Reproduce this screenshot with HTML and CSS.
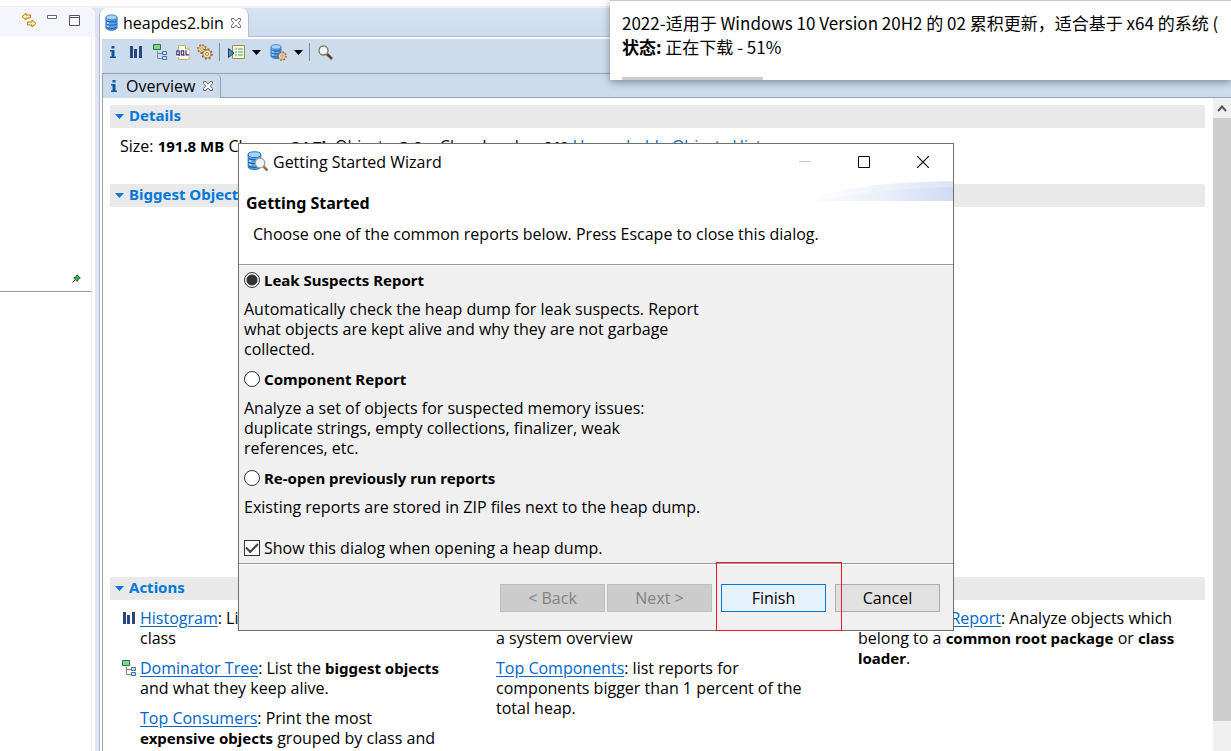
FILE: index.html
```html
<!DOCTYPE html>
<html lang="en">
<head>
<meta charset="utf-8">
<title>heapdes2.bin - Memory Analyzer</title>
<link rel="stylesheet" href="styles.css">
</head>
<body>
<svg class="defs" aria-hidden="true">
  <symbol id="i-db" viewBox="0 0 14 18">
    <path d="M1 3.500v11C1 16 3.500 17.500 7 17.500s6-1.500 6-3v-11z" fill="#5aa5ea" stroke="#2b6fc0"/>
    <path d="M1.500 7c2 2 9 2 11 0M1.500 10.500c2 2 9 2 11 0M1.500 14c2 2 9 2 11 0" fill="none" stroke="#1a5cb0" stroke-width="1.200"/>
    <path d="M3 8.800v1.500M3 12.300v1.500M3 5.500v1.200" stroke="#cfe8fc" stroke-width="2"/>
    <ellipse cx="7" cy="3.500" rx="6" ry="2.700" fill="#a5d2f7" stroke="#3579c6"/>
  </symbol>
  <symbol id="i-x" viewBox="0 0 12 12">
    <path d="M1.500 1.500h2.500l2 2.500 2-2.500h2.500v2L8.300 6l2.200 2.500v2H8L6 8l-2 2.500H1.500v-2L3.700 6 1.500 3.500z" fill="#fff" stroke="#6b6b6b"/>
  </symbol>
  <symbol id="i-info" viewBox="0 0 8 14">
    <path d="M2.500 1h3v2.500h-3zM1 5h4.500v6.500H7V13H1v-1.500h1.500v-5H1z" fill="#0f5a9e"/>
  </symbol>
  <symbol id="i-bars" viewBox="0 0 12 12">
    <path d="M0 0h3v12H0zM4 3h3v9H4zM9 0h3v12H9z" fill="#27477c"/>
  </symbol>
  <symbol id="i-tree" viewBox="0 0 15 16">
    <path d="M4.500 7v7.500H9M4.500 9.500H9" fill="none" stroke="#76879c"/>
    <path d="M.5.5h7v5h-7z" fill="#8fd08b" stroke="#1f7a4c"/>
    <path d="M9.500 7.500h4v3h-4zM9.500 12.500h4v3h-4z" fill="#cfe2f8" stroke="#3f72ad"/>
  </symbol>
  <symbol id="i-gear" viewBox="0 0 12 12">
    <circle cx="6" cy="6" r="5" fill="none" stroke="#8d6433" stroke-width="1.600" stroke-dasharray="2 1.900"/>
    <circle cx="6" cy="6" r="4" fill="#f6dfae" stroke="#a87a3c" stroke-width=".8"/>
    <circle cx="6" cy="6" r="1.500" fill="#fff" stroke="#8d6433" stroke-width=".8"/>
  </symbol>
</svg>

<div class="workbench">
  <aside class="side">
    <div class="side-tools">
      <button class="icon-btn" aria-label="Link with editor"><svg width="16" height="16" viewBox="0 0 16 16"><path d="M1 4.500 5 1v2h4.500v3H5v2zM15 11.500 11 8v2H6.500v3H11v2z" fill="#fff0a6" stroke="#b97a14"/><path d="M9.500 3v3M6.500 10v3" stroke="#b97a14"/></svg></button>
      <button class="icon-btn" aria-label="Minimize view"><svg width="10" height="12" viewBox="0 0 10 12"><path d="M.5 1.500h9v3h-9z" fill="#fff" stroke="#666"/></svg></button>
      <button class="icon-btn" aria-label="Maximize view"><svg width="11" height="11" viewBox="0 0 11 11"><path d="M.5.5h10v10H.5zM.5 2.500h10" fill="#fff" stroke="#555"/></svg></button>
    </div>
    <div class="side-view">
      <svg class="pin" width="9" height="9" viewBox="0 0 9 9"><path d="M.5 8.500 3 6" stroke="#333"/><path d="M5 .8 8.300 4 6.500 4.700 5.300 7.500 1.700 4 4 3z" fill="#3fae49" stroke="#14662a"/></svg>
    </div>
    <div class="side-rest"></div>
  </aside>

  <main class="editor">
    <div class="tabs">
      <div class="tab"><svg width="13" height="17"><use href="#i-db"/></svg><span>heapdes2.bin</span><button class="icon-btn" aria-label="Close heapdes2.bin"><svg width="12" height="12"><use href="#i-x"/></svg></button></div>
    </div>
    <div class="toolbar">
      <button class="icon-btn tool-info" aria-label="Overview"><svg width="8" height="14"><use href="#i-info"/></svg></button>
      <button class="icon-btn tool-bars" aria-label="Histogram"><svg width="12" height="12"><use href="#i-bars"/></svg></button>
      <button class="icon-btn tool-tree" aria-label="Dominator tree"><svg width="15" height="16"><use href="#i-tree"/></svg></button>
      <button class="icon-btn tool-oql" aria-label="OQL"><svg width="14" height="15" viewBox="0 0 14 15"><path d="M2.500.5h7l3.500 3.500v10.500H2.500z" fill="#fff" stroke="#c5ad6a"/><path d="M9.500.5v3.500H13" fill="#eee0b4" stroke="#c5ad6a"/><path d="M0 5h13v7H0z" fill="#fff"/><path d="M.8 5.800h2.400v4H.8zM5.300 5.800h2.400v4H5.300zM2.500 9l1.200 2M7 9l1.200 2M10 5.200v4.600h3" fill="none" stroke="#43346f" stroke-width="1.200"/></svg></button>
      <button class="icon-btn tool-gears" aria-label="Run expert system"><svg width="16" height="16"><use href="#i-gear" width="10" height="10"/><use href="#i-gear" x="4" y="4" width="12" height="12"/></svg></button>
      <span class="sep"></span>
      <button class="icon-btn tool-run" aria-label="Query browser"><svg width="17" height="15" viewBox="0 0 17 15"><path d="M4.500.5h12v13h-12z" fill="#f2fae6" stroke="#a0913c"/><path d="M7 4h2M7 7h2M7 10h2M10 4h5M10 7h5M10 10h5" stroke="#4f9c63"/><path d="M.5 3.500v9L6 8z" fill="#4c96ad" stroke="#153e70"/></svg></button>
      <button class="icon-btn tool-drop" aria-label="Query menu"><svg width="9" height="5" viewBox="0 0 9 5"><path d="M0 0h9L4.500 5z"/></svg></button>
      <button class="icon-btn tool-db" aria-label="Snapshot"><svg width="17" height="17"><use href="#i-db" width="12" height="15"/><use href="#i-gear" x="7" y="7" width="10" height="10"/></svg></button>
      <button class="icon-btn tool-drop" aria-label="Snapshot menu"><svg width="9" height="5" viewBox="0 0 9 5"><path d="M0 0h9L4.500 5z"/></svg></button>
      <span class="sep"></span>
      <button class="icon-btn tool-find" aria-label="Find"><svg width="15" height="15" viewBox="0 0 15 15"><path d="m9 9 5 5" stroke="#5e3f36" stroke-width="2.500"/><circle cx="5.500" cy="5.500" r="4.500" fill="#f2f8f5" stroke="#777c60" stroke-width="1.300"/></svg></button>
    </div>
    <div class="tabs inner">
      <div class="tab"><svg width="8" height="14"><use href="#i-info"/></svg><span>Overview</span><button class="icon-btn" aria-label="Close Overview"><svg width="12" height="12"><use href="#i-x"/></svg></button></div>
    </div>

    <div class="page">
      <div class="content">
        <h2 class="bar"><i class="tri"></i>Details</h2>
        <p class="stats">Size: <b>191.8 MB</b> Classes: <b>34.7k</b> Objects: <b>3.6m</b> Class Loader: <b>649</b> <a class="plain" href="#">Unreachable Objects Histogram</a></p>
        <h2 class="bar"><i class="tri"></i>Biggest Objects</h2>
        <div class="chart"></div>
        <h2 class="bar"><i class="tri"></i>Actions</h2>
        <div class="columns">
          <ul>
            <li><svg class="b" width="12" height="12"><use href="#i-bars"/></svg><p><a href="#">Histogram</a>: Lists number of instances per<br>class</p></li>
            <li><svg width="15" height="16"><use href="#i-tree"/></svg><p><a href="#">Dominator Tree</a>: List the <b>biggest objects</b><br>and what they keep alive.</p></li>
            <li><p><a href="#">Top Consumers</a>: Print the most<br><b>expensive objects</b> grouped by class and</p></li>
          </ul>
          <ul>
            <li><p><a href="#">Leak Suspects</a>: includes leak suspects and<br>a system overview</p></li>
            <li><p><a href="#">Top Components</a>: list reports for<br>components bigger than 1 percent of the<br>total heap.</p></li>
          </ul>
          <ul>
            <li><p><a href="#">Component Report</a>: Analyze objects which<br>belong to a <b>common root package</b> or <b>class<br>loader</b>.</p></li>
          </ul>
        </div>
      </div>
      <div class="scroll">
        <button class="icon-btn up" aria-label="Scroll up"><svg width="10" height="7" viewBox="0 0 10 7"><path d="M1 6l4-4.500L9 6" fill="none" stroke="#555" stroke-width="2"/></svg></button>
        <div class="thumb"></div>
      </div>
    </div>
  </main>
</div>

<section class="toast" lang="zh-CN">
  <p>2022-适用于 Windows 10 Version 20H2 的 02 累积更新，适合基于 x64 的系统 (</p>
  <p><b>状态:</b> 正在下载 - 51%</p>
  <div class="meter"></div>
</section>

<form class="dialog" role="dialog" aria-labelledby="dlg-title">
  <header class="titlebar">
    <svg width="22" height="21" viewBox="0 0 22 21"><use href="#i-db" width="15" height="19"/><path d="m16 15 4.500 4.500" stroke="#94704f" stroke-width="2.500"/><circle cx="13" cy="12" r="4.800" fill="#eaf4fb" stroke="#a8a296" stroke-width="1.300"/></svg>
    <span id="dlg-title">Getting Started Wizard</span>
    <button type="button" class="icon-btn win" aria-label="Minimize" disabled><svg width="12" height="12" viewBox="0 0 12 12"><path d="M0 5.500h12" stroke="#c4c4c4"/></svg></button>
    <button type="button" class="icon-btn win" aria-label="Maximize"><svg width="12" height="12" viewBox="0 0 12 12"><path d="M.5.5h11v11H.5z" fill="none" stroke="#000"/></svg></button>
    <button type="button" class="icon-btn win" aria-label="Close"><svg width="12" height="12" viewBox="0 0 12 12"><path d="m0 0 12 12M12 0 0 12" stroke="#000" stroke-width="1.200"/></svg></button>
  </header>
  <div class="banner">
    <h1>Getting Started</h1>
    <p>Choose one of the common reports below. Press Escape to close this dialog.</p>
    <svg class="wave" width="140" height="21" viewBox="0 0 140 21"><defs><linearGradient id="w1"><stop offset="0" stop-color="#fff"/><stop offset="1" stop-color="#dbe5f7"/></linearGradient><linearGradient id="w2"><stop offset="0" stop-color="#fafbfe"/><stop offset=".5" stop-color="#ebeffa"/><stop offset="1" stop-color="#d0daf4"/></linearGradient></defs><path d="M0 20C14 8 70 1 140 0v20z" fill="url(#w1)"/><path d="M0 20C40 14 80 7 140 6v14z" fill="url(#w2)"/></svg>
  </div>
  <div class="options">
    <label><input type="radio" name="report" checked><b>Leak Suspects Report</b></label>
    <p>Automatically check the heap dump for leak suspects. Report<br>what objects are kept alive and why they are not garbage<br>collected.</p>
    <label><input type="radio" name="report"><b>Component Report</b></label>
    <p>Analyze a set of objects for suspected memory issues:<br>duplicate strings, empty collections, finalizer, weak<br>references, etc.</p>
    <label><input type="radio" name="report"><b>Re-open previously run reports</b></label>
    <p>Existing reports are stored in ZIP files next to the heap dump.</p>
    <label class="show"><input type="checkbox" checked>Show this dialog when opening a heap dump.</label>
  </div>
  <footer class="buttons">
    <div class="pair"><button type="button" disabled>&lt; Back</button><button type="button" disabled>Next &gt;</button></div>
    <div class="finish"><button type="submit" class="primary">Finish</button></div>
    <button type="button">Cancel</button>
  </footer>
</form>
</body>
</html>
```
FILE: styles.css
```css
* { box-sizing: border-box; }
body {
  margin: 0;
  height: 100vh;
  overflow: hidden;
  position: relative;
  background: #fff;
  color: #000;
  font: 16px/20px "Open Sans", "Noto Sans", sans-serif;
}
p, h1, h2, ul { margin: 0; padding: 0; }
b { font: 700 15px/16px "Noto Sans", sans-serif; }
svg { display: block; flex: none; }
.defs { position: absolute; width: 0; height: 0; }
.icon-btn { display: flex; align-items: center; justify-content: center; padding: 0; border: 0; background: none; }
a { color: #0066cc; text-underline-offset: 2px; }
a.plain { text-decoration: none; }

.workbench { display: flex; height: 100%; padding-top: 6px; background: linear-gradient(#fff 6px, #f0f0f0 6px, #f0f0f0 8px, #dfe4f6 8px); }
.side { display: flex; flex-direction: column; width: 95px; margin-top: 1px; background: #fff; border-radius: 0 8px 0 0; overflow: hidden; }
.side-tools { display: flex; align-items: flex-start; gap: 10px; height: 30px; padding: 5px 0 0 21px; background: #f5f6fc; }
.side-tools .icon-btn:nth-child(2) { padding-top: 2px; margin-right: 2px; }
.side-tools .icon-btn:nth-child(3) { padding-top: 3px; }
.side-view { display: flex; align-items: flex-end; justify-content: flex-end; height: 255px; margin-right: 3px; padding: 0 10px 8px; border-right: 1px solid #e8edfa; border-bottom: 1px solid #999; }
.side-rest { flex: 1; margin-right: 3px; border-right: 1px solid #e8edfa; }

.editor { flex: 1; display: flex; flex-direction: column; min-width: 0; margin: 2px 0 0 4px; border-left: 1px solid #b0b5c6; border-radius: 8px 0 0 0; background: #fff; overflow: hidden; }
.tabs { display: flex; height: 29px; margin-bottom: 2px; background: linear-gradient(#d5e4f2, #cddcec); border-bottom: 1px solid #b4bcd8; }
.tab { display: flex; align-items: center; gap: 5px; height: 29px; padding: 0 6px 0 5px; background: #fff; border-right: 1px solid #b4bcd8; border-radius: 0 8px 0 0; }
.tabs > .tab .icon-btn { margin-left: 1px; }
.toolbar { display: flex; align-items: center; height: 34px; margin-left: 2px; padding: 0 0 8px 7px; background: #cddcec; }
.tool-bars { margin-left: 13px; }
.tool-tree { margin-left: 11px; }
.tool-oql { margin-left: 8px; }
.tool-gears { margin-left: 7px; }
.sep { width: 1px; height: 18px; margin: 0 8px 0 6px; background: #858b93; }
.tool-drop { margin-left: 7px; }
.tool-db { margin-left: 9px; }
.inner { height: 25px; margin: 0 0 0 2px; background: #cddcec; border-top: 1px solid #9a9fa8; border-bottom: 1px solid #9a9fa8; border-left: 1px solid #9a9fa8; }
.inner .tab { height: 24px; padding: 0 6px 0 7px; gap: 8px; background: #cddcec; border-color: #9a9fa8; border-radius: 0 5px 0 0; }
.inner > .tab .icon-btn { margin-left: -1px; }

.page { flex: 1; display: flex; min-height: 0; margin-left: 2px; border-left: 1px solid #9a9fa8; }
.content { flex: 1; min-width: 0; padding: 7px 8px 0 7px; overflow: hidden; }
.bar { display: flex; align-items: center; gap: 5px; height: 23px; padding: 0 0 3px 5px; background: #e9e9e9; border-radius: 2px 2px 0 0; color: #0078d7; font: 700 15px/20px "Noto Sans", sans-serif; }
.tri { width: 9px; height: 5px; margin-top: 3px; background: #0078d7; clip-path: polygon(0 0, 100% 0, 50% 100%); }
.stats { padding: 8px 10px 28px; white-space: nowrap; }
.chart { height: 370px; }
.columns { display: grid; grid-template-columns: 356fr 362fr 365fr; padding: 8px 0 0 12px; white-space: nowrap; }
.columns ul { list-style: none; display: grid; gap: 10px; align-content: start; }
.columns li { display: grid; grid-template-columns: 18px 1fr; }
.columns li p { grid-column: 2; }
.columns li svg { grid-row: 1; margin-top: 2px; }
.columns li svg.b { margin: 4px 0 0 1px; }
.scroll { display: flex; flex-direction: column; width: 18px; background: #f0f0f0; }
.up { height: 20px; }
.thumb { flex: 1; margin-bottom: 30px; background: #cdcdcd; }

.toast { position: absolute; top: 0; left: 610px; right: 0; height: 80px; padding: 10px 0 0 12px; display: flex; flex-direction: column; background: #fff; border-top: 1px solid #c8c8c8; box-shadow: 0 2px 8px rgba(0, 0, 0, .4); overflow: hidden; white-space: nowrap; font: 17px/24px "Noto Sans CJK SC", sans-serif; }
.toast b { font: inherit; font-weight: 700; }
.meter { width: 141px; height: 3px; margin-top: auto; background: #ccc; }

.dialog { position: absolute; top: 143px; left: 238px; width: 716px; background: #f0f0f0; border: 1px solid #707070; }
.titlebar { display: flex; align-items: center; height: 37px; padding: 0 1px 2px 8px; background: #fff; }
.titlebar > span { flex: 1; padding-left: 4px; }
.win { width: 59px; height: 35px; }
.banner { position: relative; height: 84px; padding: 12px 7px 0; background: #fff; border-bottom: 1px solid #999; }
.banner h1 { font: 700 16px/20px "Noto Sans", sans-serif; }
.banner p { padding: 11px 7px 0; }
.wave { position: absolute; top: 0; right: 0; }
.options { display: flex; flex-direction: column; gap: 10px; padding: 4px 5px 6px; border-top: 1px solid #fff; border-bottom: 1px solid #999; }
.options label { display: flex; align-items: center; gap: 4px; height: 19px; }
.options .show { margin-top: 11px; }
input { appearance: none; width: 16px; height: 16px; margin: 0; border: 1px solid #333; background: #fff; }
input[type=radio] { border-radius: 50%; }
input[type=radio]:checked { background: radial-gradient(circle, #333 5px, #fff 6px); }
input[type=checkbox]:checked { display: grid; place-items: center; }
input[type=checkbox]:checked::after { content: ""; width: 10px; height: 5px; margin-top: -3px; border: solid #444; border-width: 0 0 2px 2px; transform: rotate(-45deg); }
.buttons { display: flex; justify-content: flex-end; gap: 9px; padding: 19px 13px 18px; border-top: 1px solid #fff; }
.pair { display: flex; gap: 2px; }
.buttons button { display: block; width: 105px; height: 28px; padding: 0; border: 1px solid #adadad; background: #e1e1e1; color: #000; font: inherit; }
.buttons button:disabled { background: #ccc; border-color: #bfbfbf; color: #838383; }
.buttons .primary { background: #e5f1fb; border-color: #0078d7; }
.finish { position: relative; }
.finish::after { content: ""; position: absolute; inset: -22px -16px -19px -5px; border: 1px solid #ed1c24; pointer-events: none; }
```
